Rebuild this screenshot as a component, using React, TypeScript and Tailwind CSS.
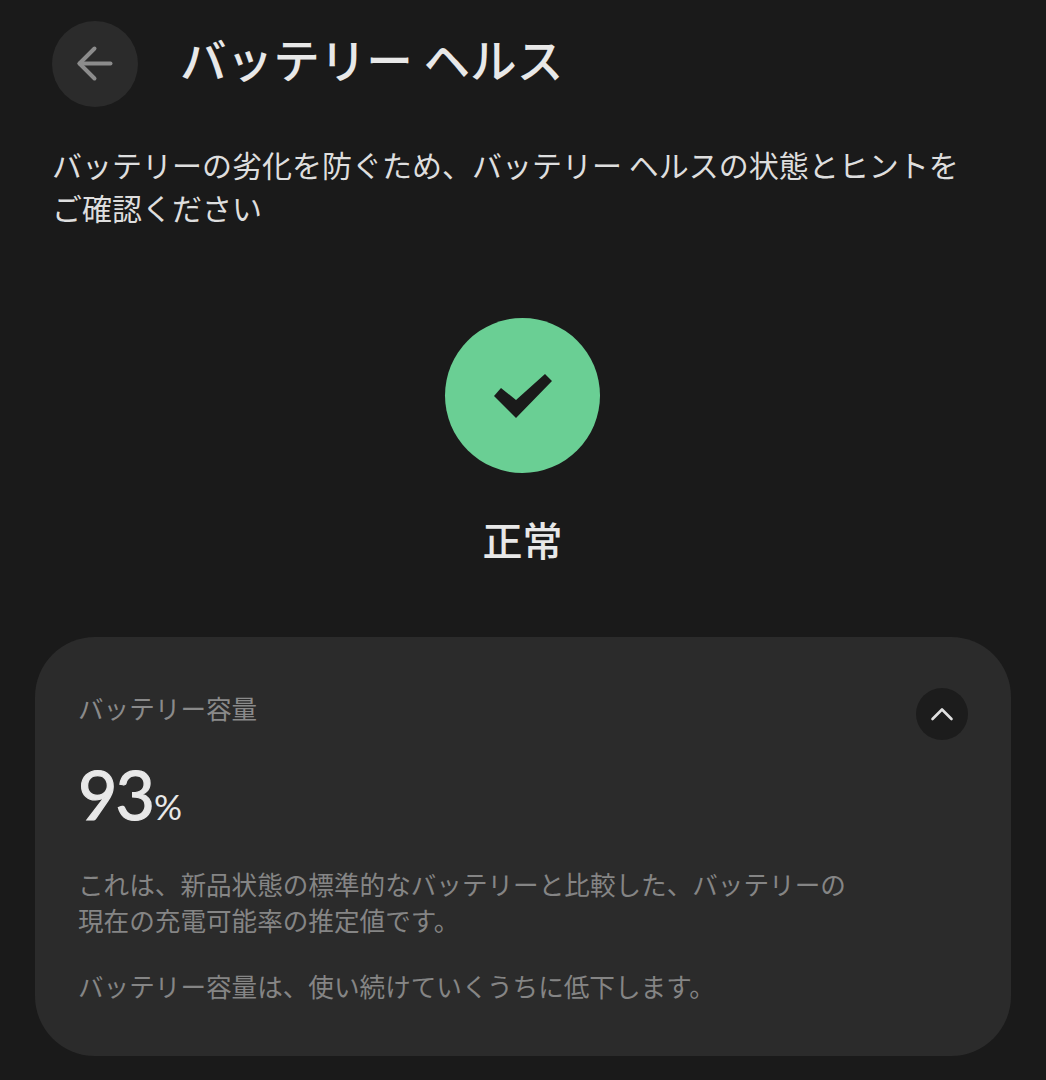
import React from "react";

const jp = "font-['Noto_Sans_CJK_JP','Noto_Sans',sans-serif]";

export default function App() {
  return (
    <div className={`w-[1046px] h-[1080px] overflow-hidden bg-[#1a1a1a] ${jp}`}>
      <div className="flex items-center gap-[42px] pl-[52px] pt-[21px]">
        <div className="w-[86px] h-[86px] rounded-full bg-[#2b2b2b] flex items-center justify-center">
          <svg width="38" height="38" viewBox="0 0 38 38" fill="none" stroke="#8c8c8c" strokeWidth="4" strokeLinecap="round" strokeLinejoin="round">
            <path d="M34.5 18.5H3.5" />
            <path d="M18.5 3.5L3.5 18.5L18.5 33.5" />
          </svg>
        </div>
        <h1 className="text-[46.6px] leading-[64px] font-medium text-[#e8e8e8] -mt-[12px] whitespace-nowrap">バッテリー ヘルス</h1>
      </div>

      <p className="pl-[52px] pr-[50px] mt-[36px] text-[30px] leading-[43px] text-[#dedede]">
        バッテリーの劣化を防ぐため、バッテリー ヘルスの状態とヒントを
        <br />
        ご確認ください
      </p>

      <div className="flex flex-col items-center mt-[89px] pr-px">
        <div className="w-[155px] h-[155px] rounded-full bg-[#6acf94] flex items-center justify-center">
          <svg width="58" height="46" viewBox="0 0 58 46" fill="#1a1a1a">
            <path d="M0 23L7 15L22 27L51 1L58 8L22 45Z" />
          </svg>
        </div>
        <div className="mt-[36px] text-[40px] leading-[60px] font-medium text-[#e8e8e8]">正常</div>
      </div>

      <div className="relative mx-[35px] mt-[68px] h-[419px] rounded-[60px] bg-[#2b2b2b] pl-[44px] pt-[52px]">
        <div className="text-[25.6px] leading-[38px] text-[#8a8a8a] -ml-px">バッテリー容量</div>
        <div className="mt-[29px] -ml-[1px] flex items-baseline font-['Lato',sans-serif] text-[#e8e8e8]">
          <span className="text-[68px] leading-[76px] tracking-[-2px] [-webkit-text-stroke:1.2px_#e8e8e8]">93</span>
          <span className="text-[35px] leading-[40px] ml-[1px]">%</span>
        </div>
        <p className="mt-[34px] -ml-px text-[25.6px] leading-[36px] text-[#858585]">
          これは、新品状態の標準的なバッテリーと比較した、バッテリーの
          <br />
          現在の充電可能率の推定値です。
        </p>
        <p className="mt-[30px] -ml-px text-[25.6px] leading-[36px] text-[#858585]">
          バッテリー容量は、使い続けていくうちに低下します。
        </p>
        <div className="absolute left-[881px] top-[51px] w-[52px] h-[52px] rounded-full bg-[#1c1c1c] flex items-center justify-center">
          <svg width="24" height="14" viewBox="0 0 24 14" fill="none" stroke="#e0e0e0" strokeWidth="2.6" strokeLinecap="round" strokeLinejoin="round">
            <path d="M2.5 12L12 2.5L21.5 12" />
          </svg>
        </div>
      </div>
    </div>
  );
}
